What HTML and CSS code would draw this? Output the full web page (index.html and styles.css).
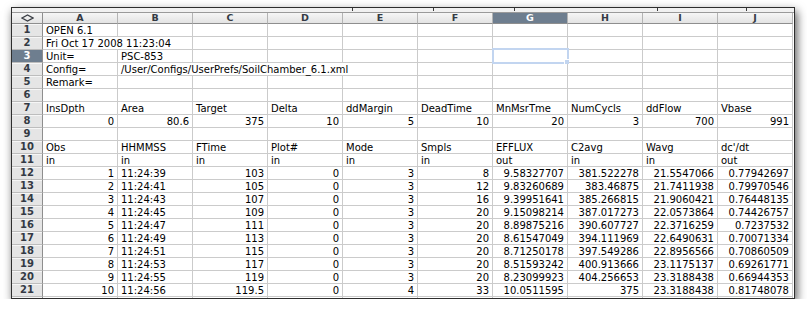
FILE: index.html
```html
<!DOCTYPE html>
<html lang="en">

<head>
    <meta charset="UTF-8">
    <title>SoilChamber data</title>
    <link rel="stylesheet" href="styles.css">
</head>

<body>
    <div class="window">
        <div class="strip">
            <span class="tick t1"></span>
            <span class="tick t2"></span>
            <span class="tick t3"></span>
            <span class="tick t4"></span>
            <span class="tick t5"></span>
        </div>
        <div class="sheet">
            <div class="corner">
                <svg width="13" height="8" viewBox="0 0 13 8"><polygon points="1,4 6.5,1 12,4 6.5,7" fill="none" stroke="#3b3f46" stroke-width="1.4"/></svg>
            </div>
            <div class="ch">A</div><div class="ch">B</div><div class="ch">C</div><div class="ch">D</div><div class="ch">E</div>
            <div class="ch">F</div><div class="ch on">G</div><div class="ch">H</div><div class="ch">I</div><div class="ch">J</div>

            <div class="rh">1</div>
            <div class="c">OPEN 6.1</div><div class="c"></div><div class="c"></div><div class="c"></div><div class="c"></div>
            <div class="c"></div><div class="c"></div><div class="c"></div><div class="c"></div><div class="c"></div>

            <div class="rh">2</div>
            <div class="c span2">Fri Oct 17 2008 11:23:04</div><div class="c"></div><div class="c"></div><div class="c"></div>
            <div class="c"></div><div class="c"></div><div class="c"></div><div class="c"></div><div class="c"></div>

            <div class="rh on">3</div>
            <div class="c">Unit=</div><div class="c">PSC-853</div><div class="c"></div><div class="c"></div><div class="c"></div>
            <div class="c"></div><div class="c sel"></div><div class="c"></div><div class="c"></div><div class="c"></div>

            <div class="rh">4</div>
            <div class="c">Config=</div><div class="c span4">/User/Configs/UserPrefs/SoilChamber_6.1.xml</div>
            <div class="c"></div><div class="c"></div><div class="c"></div><div class="c"></div><div class="c"></div>

            <div class="rh">5</div>
            <div class="c">Remark=</div><div class="c"></div><div class="c"></div><div class="c"></div><div class="c"></div>
            <div class="c"></div><div class="c"></div><div class="c"></div><div class="c"></div><div class="c"></div>

            <div class="rh">6</div>
            <div class="c"></div><div class="c"></div><div class="c"></div><div class="c"></div><div class="c"></div>
            <div class="c"></div><div class="c"></div><div class="c"></div><div class="c"></div><div class="c"></div>

            <div class="rh">7</div>
            <div class="c">InsDpth</div><div class="c">Area</div><div class="c">Target</div><div class="c">Delta</div><div class="c">ddMargin</div>
            <div class="c">DeadTime</div><div class="c">MnMsrTme</div><div class="c">NumCycls</div><div class="c">ddFlow</div><div class="c">Vbase</div>

            <div class="rh">8</div>
            <div class="c n">0</div><div class="c n">80.6</div><div class="c n">375</div><div class="c n">10</div><div class="c n">5</div>
            <div class="c n">10</div><div class="c n">20</div><div class="c n">3</div><div class="c n">700</div><div class="c n">991</div>

            <div class="rh">9</div>
            <div class="c"></div><div class="c"></div><div class="c"></div><div class="c"></div><div class="c"></div>
            <div class="c"></div><div class="c"></div><div class="c"></div><div class="c"></div><div class="c"></div>

            <div class="rh">10</div>
            <div class="c">Obs</div><div class="c">HHMMSS</div><div class="c">FTime</div><div class="c">Plot#</div><div class="c">Mode</div>
            <div class="c">Smpls</div><div class="c">EFFLUX</div><div class="c">C2avg</div><div class="c">Wavg</div><div class="c">dc'/dt</div>

            <div class="rh">11</div>
            <div class="c">in</div><div class="c">in</div><div class="c">in</div><div class="c">in</div><div class="c">in</div>
            <div class="c">in</div><div class="c">out</div><div class="c">in</div><div class="c">in</div><div class="c">out</div>

            <div class="rh">12</div>
            <div class="c n">1</div><div class="c">11:24:39</div><div class="c n">103</div><div class="c n">0</div><div class="c n">3</div>
            <div class="c n">8</div><div class="c n">9.58327707</div><div class="c n">381.522278</div><div class="c n">21.5547066</div><div class="c n">0.77942697</div>

            <div class="rh">13</div>
            <div class="c n">2</div><div class="c">11:24:41</div><div class="c n">105</div><div class="c n">0</div><div class="c n">3</div>
            <div class="c n">12</div><div class="c n">9.83260689</div><div class="c n">383.46875</div><div class="c n">21.7411938</div><div class="c n">0.79970546</div>

            <div class="rh">14</div>
            <div class="c n">3</div><div class="c">11:24:43</div><div class="c n">107</div><div class="c n">0</div><div class="c n">3</div>
            <div class="c n">16</div><div class="c n">9.39951641</div><div class="c n">385.266815</div><div class="c n">21.9060421</div><div class="c n">0.76448135</div>

            <div class="rh">15</div>
            <div class="c n">4</div><div class="c">11:24:45</div><div class="c n">109</div><div class="c n">0</div><div class="c n">3</div>
            <div class="c n">20</div><div class="c n">9.15098214</div><div class="c n">387.017273</div><div class="c n">22.0573864</div><div class="c n">0.74426757</div>

            <div class="rh">16</div>
            <div class="c n">5</div><div class="c">11:24:47</div><div class="c n">111</div><div class="c n">0</div><div class="c n">3</div>
            <div class="c n">20</div><div class="c n">8.89875216</div><div class="c n">390.607727</div><div class="c n">22.3716259</div><div class="c n">0.7237532</div>

            <div class="rh">17</div>
            <div class="c n">6</div><div class="c">11:24:49</div><div class="c n">113</div><div class="c n">0</div><div class="c n">3</div>
            <div class="c n">20</div><div class="c n">8.61547049</div><div class="c n">394.111969</div><div class="c n">22.6490631</div><div class="c n">0.70071334</div>

            <div class="rh">18</div>
            <div class="c n">7</div><div class="c">11:24:51</div><div class="c n">115</div><div class="c n">0</div><div class="c n">3</div>
            <div class="c n">20</div><div class="c n">8.71250178</div><div class="c n">397.549286</div><div class="c n">22.8956566</div><div class="c n">0.70860509</div>

            <div class="rh">19</div>
            <div class="c n">8</div><div class="c">11:24:53</div><div class="c n">117</div><div class="c n">0</div><div class="c n">3</div>
            <div class="c n">20</div><div class="c n">8.51593242</div><div class="c n">400.913666</div><div class="c n">23.1175137</div><div class="c n">0.69261771</div>

            <div class="rh">20</div>
            <div class="c n">9</div><div class="c">11:24:55</div><div class="c n">119</div><div class="c n">0</div><div class="c n">3</div>
            <div class="c n">20</div><div class="c n">8.23099923</div><div class="c n">404.256653</div><div class="c n">23.3188438</div><div class="c n">0.66944353</div>

            <div class="rh">21</div>
            <div class="c n">10</div><div class="c">11:24:56</div><div class="c n">119.5</div><div class="c n">0</div><div class="c n">4</div>
            <div class="c n">33</div><div class="c n">10.0511595</div><div class="c n">375</div><div class="c n">23.3188438</div><div class="c n">0.81748078</div>

            <div class="rh"></div>
            <div class="c"></div><div class="c"></div><div class="c"></div><div class="c"></div><div class="c"></div>
            <div class="c"></div><div class="c"></div><div class="c"></div><div class="c"></div><div class="c"></div>
        </div>
    </div>
</body>

</html>
```

FILE: styles.css
```css
body {
    margin: 0;
    background-color: #fff;
    font-family: "DejaVu Sans", Verdana, sans-serif;
    font-size: 10px;
    color: #000;
}

.window {
    margin: 7px 0 0 11px;
    width: 782px;
    height: 290px;
    border: 1px solid #2e2e2e;
    background-color: #fff;
    box-shadow: 2px 4px 9px rgba(0, 0, 0, 0.65);
    overflow: hidden;
}

.strip {
    position: relative;
    height: 4px;
    background-color: #f1f1f1;
}

.tick {
    position: absolute;
    top: 0;
    width: 1px;
    height: 3px;
    background-color: #3a3a3a;
}

.t1 { left: 340px; }
.t2 { left: 421px; }
.t3 { left: 502px; }
.t4 { left: 645px; }
.t5 { left: 734px; }

.sheet {
    display: grid;
    grid-template-columns: 31px repeat(10, 75px);
    grid-template-rows: 11px;
    grid-auto-rows: 13px;
    border-top: 1px solid #9a9a9a;
}

.corner,
.ch {
    box-sizing: border-box;
    border-right: 1px solid #b4b4b4;
    border-bottom: 1px solid #8e8e8e;
    background: linear-gradient(#f6f6f6, #e3e3e3);
}

.corner {
    display: flex;
    align-items: center;
    justify-content: center;
    border-right-color: #8e8e8e;
}

.corner svg {
    display: block;
}

.ch {
    text-align: center;
    font-weight: bold;
    font-size: 9.5px;
    line-height: 10px;
    color: #343a44;
}

.rh {
    box-sizing: border-box;
    border-right: 1px solid #8e8e8e;
    border-bottom: 1px solid #bdbdbd;
    background-color: #e5e5e5;
    box-shadow: inset 0 1px 0 #f6f6f6;
    text-align: center;
    font-weight: bold;
    font-size: 10px;
    line-height: 12px;
    color: #343a44;
}

.ch.on,
.rh.on {
    background: #6e7e8f;
    color: #fff;
    box-shadow: none;
}

.c {
    box-sizing: border-box;
    border-right: 1px solid #cbcbcb;
    border-bottom: 1px solid #cbcbcb;
    padding: 1px 3px 0;
    line-height: 12px;
    white-space: nowrap;
}

.n {
    text-align: right;
}

.span2 {
    grid-column: span 2;
}

.span4 {
    grid-column: span 4;
}

.sel {
    position: relative;
    z-index: 1;
}

.sel::before {
    content: '';
    position: absolute;
    top: -2px;
    left: -1px;
    right: -2px;
    bottom: -2px;
    border: 2px solid #c2d5f0;
}

.sel::after {
    content: '';
    position: absolute;
    right: -2px;
    bottom: -2px;
    width: 4px;
    height: 4px;
    background-color: #c2d5f0;
    border-left: 1px solid #fff;
    border-top: 1px solid #fff;
}
```
